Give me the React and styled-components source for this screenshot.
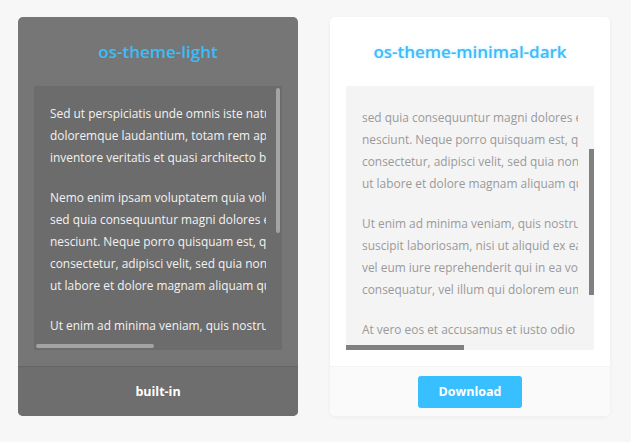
import React from 'react';
import styled, { createGlobalStyle } from 'styled-components';

const GlobalStyle = createGlobalStyle`
  html, body {
    margin: 0;
    padding: 0;
    background: #f7f7f7;
    font-family: "Open Sans", "Lato", sans-serif;
  }
`;

const Page = styled.div`
  display: flex;
  gap: 32px;
  padding: 17px 18px;
  width: 631px;
  height: 442px;
  box-sizing: border-box;
`;

const Card = styled.div`
  width: 280px;
  height: 399px;
  border-radius: 5px;
  overflow: hidden;
  display: flex;
  flex-direction: column;
  background: ${(props) => (props.dark ? '#767676' : '#ffffff')};
  box-shadow: ${(props) => (props.dark ? 'none' : '0 1px 4px rgba(0, 0, 0, 0.05)')};
`;

const Title = styled.h2`
  margin: 0;
  height: 68px;
  display: flex;
  align-items: center;
  justify-content: center;
  font-size: 17px;
  font-weight: 600;
  color: #3bbdfb;
  text-shadow: ${(props) => (props.dark ? 'none' : '0 0 3px rgba(56, 190, 255, 0.35)')};
`;

const Body = styled.div`
  padding: 1px 16px 16px;
`;

const ScrollBox = styled.div`
  position: relative;
  height: 264px;
  padding: 17px 16px 15px;
  box-sizing: border-box;
  background: ${(props) => (props.dark ? '#6c6c6c' : '#f4f4f4')};
`;

const Viewport = styled.div`
  height: 100%;
  overflow: hidden;
`;

const Content = styled.div`
  font-size: 11.9px;
  line-height: 22px;
  white-space: nowrap;
  color: ${(props) => (props.dark ? '#f2f2f2' : '#9a9a9a')};

  p {
    margin: 0 0 18px;
  }
`;

const VBar = styled.div`
  position: absolute;
  right: ${(props) => (props.dark ? '2px' : '0')};
  width: ${(props) => (props.dark ? '4px' : '5px')};
  border-radius: ${(props) => (props.dark ? '2px' : '0')};
  background: ${(props) => (props.dark ? '#a4a4a4' : '#808080')};
`;

const HBar = styled.div`
  position: absolute;
  left: ${(props) => (props.dark ? '2px' : '0')};
  height: ${(props) => (props.dark ? '4px' : '5px')};
  width: 118px;
  border-radius: ${(props) => (props.dark ? '2px' : '0')};
  background: ${(props) => (props.dark ? '#a4a4a4' : '#808080')};
`;

const Footer = styled.div`
  flex: 1;
  display: flex;
  align-items: center;
  justify-content: center;
  border-top: 1px solid ${(props) => (props.dark ? '#646464' : '#f3f3f3')};
  background: ${(props) => (props.dark ? '#6e6e6e' : '#fafafa')};
`;

const Label = styled.span`
  color: #ffffff;
  font-size: 12.5px;
  font-weight: 700;
`;

const DownloadButton = styled.button`
  width: 104px;
  height: 32px;
  border: none;
  border-radius: 3px;
  background: #38bfff;
  color: #ffffff;
  font-family: inherit;
  font-size: 12.5px;
  font-weight: 700;
  cursor: pointer;
`;

const paragraphs = [
  [
    'Sed ut perspiciatis unde omnis iste natus error sit voluptatem accusantium',
    'doloremque laudantium, totam rem aperiam, eaque ipsa quae ab illo',
    'inventore veritatis et quasi architecto beatae vitae dicta sunt explicabo.',
  ],
  [
    'Nemo enim ipsam voluptatem quia voluptas sit aspernatur aut odit aut fugit,',
    'sed quia consequuntur magni dolores eos qui ratione voluptatem sequi',
    'nesciunt. Neque porro quisquam est, qui dolorem ipsum quia dolor sit amet,',
    'consectetur, adipisci velit, sed quia non numquam eius modi tempora incidunt',
    'ut labore et dolore magnam aliquam quaerat voluptatem.',
  ],
  [
    'Ut enim ad minima veniam, quis nostrum exercitationem ullam corporis',
    'suscipit laboriosam, nisi ut aliquid ex ea commodi consequatur? Quis autem',
    'vel eum iure reprehenderit qui in ea voluptate velit esse quam nihil molestiae',
    'consequatur, vel illum qui dolorem eum fugiat quo voluptas nulla pariatur?',
  ],
  [
    'At vero eos et accusamus et iusto odio dignissimos ducimus qui blanditiis',
    'praesentium voluptatum deleniti atque corrupti quos dolores et quas',
  ],
];

const ThemePreview = ({ dark, scroll, vbar }) => (
  <ScrollBox dark={dark}>
    <Viewport>
      <Content dark={dark} style={{ marginTop: -scroll }}>
        {paragraphs.map((lines, i) => (
          <p key={i}>
            {lines.map((line, j) => (
              <React.Fragment key={j}>
                {line}
                <br />
              </React.Fragment>
            ))}
          </p>
        ))}
      </Content>
    </Viewport>
    <VBar dark={dark} style={{ top: vbar.top, height: vbar.height }} />
    <HBar dark={dark} style={{ bottom: dark ? 2 : 0 }} />
  </ScrollBox>
);

export default function App() {
  return (
    <>
      <GlobalStyle />
      <Page>
        <Card dark>
          <Title dark>os-theme-light</Title>
          <Body>
            <ThemePreview dark scroll={1} vbar={{ top: 2, height: 145 }} />
          </Body>
          <Footer dark>
            <Label>built-in</Label>
          </Footer>
        </Card>
        <Card>
          <Title>os-theme-minimal-dark</Title>
          <Body>
            <ThemePreview scroll={103} vbar={{ top: 63, height: 146 }} />
          </Body>
          <Footer>
            <DownloadButton>Download</DownloadButton>
          </Footer>
        </Card>
      </Page>
    </>
  );
}
